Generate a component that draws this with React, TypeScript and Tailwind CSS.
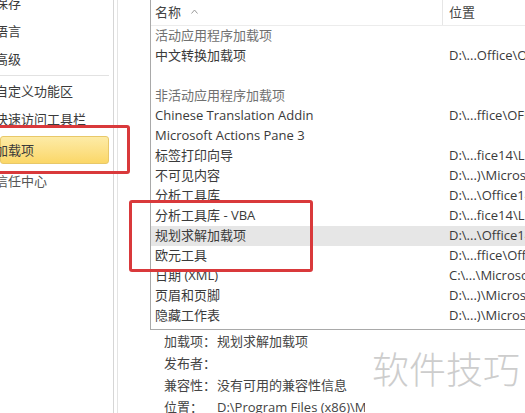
import React from "react";

const FONT = { fontFamily: '"Open Sans", "Noto Sans CJK SC", sans-serif' };

type Row = { name: string; loc?: string; group?: boolean; sel?: boolean };

const rows: Row[] = [
  { name: "活动应用程序加载项", group: true },
  { name: "中文转换加载项", loc: "D:\\...Office\\Office14\\ADDINS\\CHS.DLL" },
  { name: "" },
  { name: "非活动应用程序加载项", group: true },
  { name: "Chinese Translation Addin", loc: "D:\\...ffice\\OFFICE14\\ADDINS\\TCSC.DLL" },
  { name: "Microsoft Actions Pane 3", loc: "" },
  { name: "标签打印向导", loc: "D:\\...fice14\\Library\\LABEL.XLAM" },
  { name: "不可见内容", loc: "D:\\...)\\Microsoft Office\\Office14" },
  { name: "分析工具库", loc: "D:\\...\\Office14\\Library\\ANALYS32" },
  { name: "分析工具库 - VBA", loc: "D:\\...fice14\\Library\\ATPVBAEN" },
  { name: "规划求解加载项", loc: "D:\\...\\Office14\\Library\\SOLVER", sel: true },
  { name: "欧元工具", loc: "D:\\...ffice\\Office14\\Library\\EURO" },
  { name: "日期 (XML)", loc: "C:\\...\\Microsoft Shared\\Smart Tag" },
  { name: "页眉和页脚", loc: "D:\\...)\\Microsoft Office\\Office14" },
  { name: "隐藏工作表", loc: "D:\\...)\\Microsoft Office\\Office14" },
];

const leftItems = ["保存", "语言", "高级"];
const leftItems2 = ["自定义功能区", "快速访问工具栏"];

const details: [string, string][] = [
  ["加载项：", "规划求解加载项"],
  ["发布者：", ""],
  ["兼容性：", "没有可用的兼容性信息"],
  ["位置：", "D:\\Program Files (x86)\\Microsoft Office\\Office14\\Library\\SOLVER\\SOLVER.XLAM"],
];

export default function App() {
  return (
    <div
      className="relative w-[525px] h-[413px] overflow-hidden bg-white text-[13px] text-[#3a3a3a]"
      style={FONT}
    >
      <div className="flex h-full">
        {/* Left navigation */}
        <div className="w-[114px] shrink-0 border-r border-[#d6d6d6] overflow-hidden">
          <div className="-mt-[11px] flex flex-col">
            {leftItems.map((t) => (
              <div key={t} className="h-[28px] flex items-center -ml-[5px] leading-none">
                {t}
              </div>
            ))}
            <div className="h-[3px] border-b border-[#e2e2e2] mr-[4px]" />
            <div className="h-[1px]" />
            {leftItems2.map((t) => (
              <div key={t} className="h-[28px] flex items-center -ml-[5px] leading-none whitespace-nowrap">
                {t}
              </div>
            ))}
            <div className="h-[3px]" />
            <div className="h-[28px] mr-[4px] flex items-center rounded-[3px] border border-[#e8c869] bg-gradient-to-b from-[#fdeba6] to-[#fbd767]">
              <span className="-ml-[6px] leading-none">加载项</span>
            </div>
            <div className="h-[3px]" />
            <div className="h-[28px] flex items-center -ml-[5px] leading-none text-[#555]">信任中心</div>
          </div>
        </div>
        <div className="w-[4px] shrink-0 border-r border-[#e4e4e4]" />
        <div className="w-[32px] shrink-0" />

        {/* Right: add-in list and details */}
        <div className="flex-1 min-w-0 flex flex-col">
          <div className="border-l border-b border-[#a9a9a9] w-[420px] pb-[3px]">
            {/* header */}
            <div className="h-[26px] flex border-b border-[#ececec]">
              <div className="w-[291px] shrink-0 flex items-center pl-[4px] gap-[10px] text-[#444]">
                <span>名称</span>
                <svg width="7" height="5" viewBox="0 0 7 5" className="mt-[-2px]">
                  <polyline points="0.5,4.5 3.5,1 6.5,4.5" fill="none" stroke="#9a9a9a" strokeWidth="1" />
                </svg>
              </div>
              <div className="w-px bg-[#e6e6e6]" />
              <div className="flex-1 flex items-center pl-[6px] text-[#444] whitespace-nowrap">位置</div>
            </div>
            {rows.map((r, i) => (
              <div
                key={i}
                className={`h-[20px] flex items-center whitespace-nowrap ${r.sel ? "bg-[#e6e6e6]" : ""}`}
              >
                <div className={`w-[292px] shrink-0 pl-[4px] ${r.group ? "text-[#707070]" : ""}`}>
                  {r.name}
                </div>
                <div className="pl-[6px]">{r.loc}</div>
              </div>
            ))}
          </div>

          {/* details */}
          <div className="flex flex-col pt-[1px] pl-[14px] text-[#444]">
            {details.map(([k, v]) => (
              <div key={k} className="h-[22px] flex items-center whitespace-nowrap">
                <span className="w-[53px] shrink-0">{k}</span>
                <span className="w-[148px] overflow-hidden">{v}</span>
              </div>
            ))}
          </div>
        </div>
      </div>

      {/* red highlight boxes */}
      <div className="absolute left-[-4px] top-[125px] w-[134px] h-[49px] border-[3px] border-[#d9393b] rounded-[3px]" />
      <div className="absolute left-[129px] top-[200px] w-[184px] h-[72px] border-[3px] border-[#d9393b] rounded-[3px]" />

      {/* watermark */}
      <div
        className="absolute left-[372px] top-[350px] text-[37px] leading-none font-light text-[#cdcdcd] whitespace-nowrap"
        style={{ fontFamily: '"Noto Sans CJK SC", sans-serif' }}
      >
        软件技巧
      </div>
    </div>
  );
}
